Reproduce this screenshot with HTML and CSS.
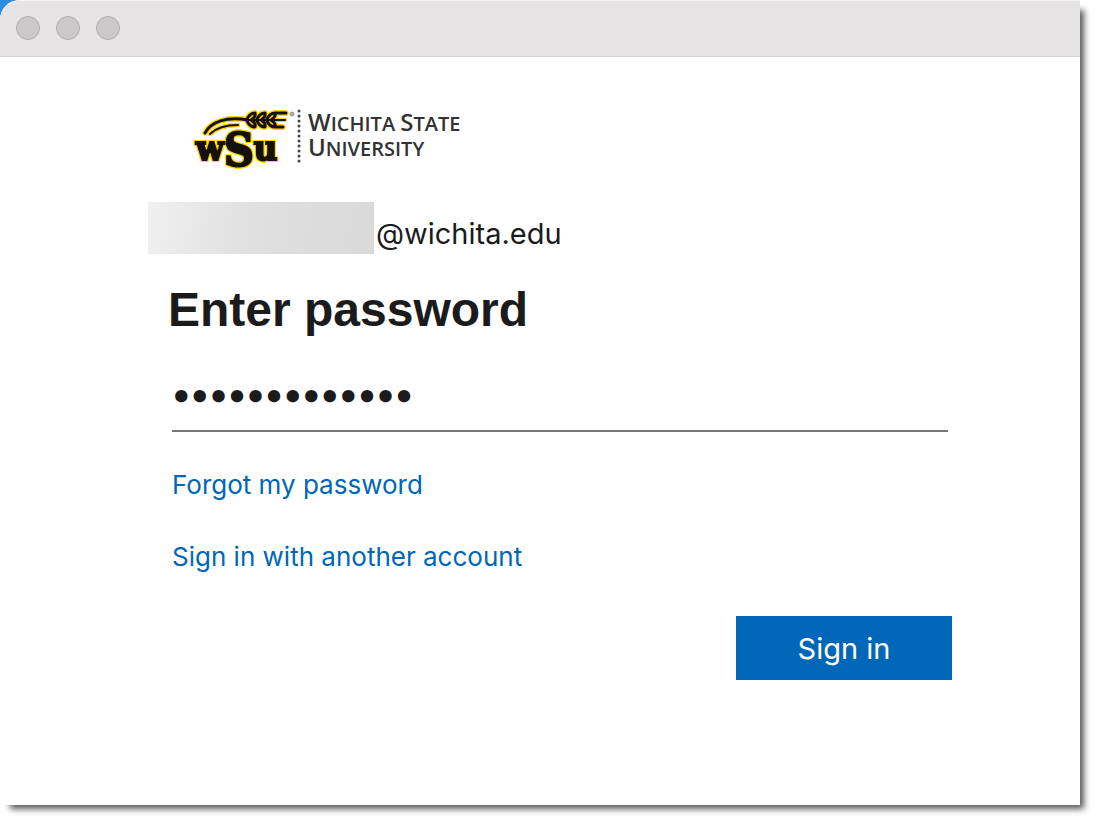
FILE: index.html
```html
<!DOCTYPE html>
<html lang="en">
<head>
    <meta charset="utf-8">
    <title>Sign in</title>
    <link rel="stylesheet" href="styles.css">
</head>
<body>
    <div class="window">
        <div class="titlebar">
            <button class="dot" type="button" aria-label="Close"></button>
            <button class="dot" type="button" aria-label="Minimize"></button>
            <button class="dot" type="button" aria-label="Zoom"></button>
        </div>

        <form class="login">
            <div class="brand">
                <!-- wheat shock logo -->
                <svg class="logo" width="108" height="68" viewBox="0 0 108 68">
                    <g class="mark">
                        <g fill="none" stroke="#15100a" stroke-linecap="round" stroke-linejoin="round">
                            <path d="M13 28C19 17 34 11 56 15" stroke-width="3"/>
                            <path d="M18 29C25 22 34 20 46 20" stroke-width="2"/>
                            <path d="M54 15H93" stroke-width="2"/>
                            <path d="M55 14C57 10 59 8 63 8Q64 12 60 14M65 14C67 10 69 8 73 8Q74 12 70 14M75 14C77 10 79 8 83 8Q84 12 80 14M83 8H94M55 16C57 20 59 22 63 22Q64 18 60 16M65 16C67 20 69 22 73 22Q74 18 70 16M75 16C77 20 79 22 83 22Q84 18 80 16M83 22H91" stroke-width="3"/>
                        </g>
                        <text class="logo-text" x="4" y="55">w<tspan class="logo-s" dy="6">S</tspan><tspan dy="-6">u</tspan></text>
                    </g>
                    <circle cx="100" cy="9" r="2" fill="#aaa" stroke="#999"/>
                    <path d="M107 6V60" stroke="#444" stroke-width="3" stroke-linecap="round" stroke-dasharray="0 5"/>
                </svg>
                <div class="brand-name"><span class="cap">W</span>ICHITA <span class="cap">S</span>TATE<br><span class="cap">U</span>NIVERSITY</div>
            </div>

            <div class="account"><span class="redacted"></span><span>@wichita.edu</span></div>

            <h1><label for="password">Enter password</label></h1>
            <input type="password" id="password" value="aaaaaaaaaaaaa">

            <a href="#">Forgot my password</a>
            <a href="#">Sign in with another account</a>

            <button class="signin" type="button">Sign in</button>
        </form>
    </div>
</body>
</html>
```

FILE: styles.css
```css
* {
    box-sizing: border-box;
}

body {
    margin: 0;
    padding: 0 15px 15px 0;
    font-family: Inter, "Liberation Sans", sans-serif;
    color: #1b1b1b;
    background: #fff linear-gradient(#2f8bdc, #2f8bdc) no-repeat 0 0 / 24px 24px;
}

.window {
    min-height: calc(100vh - 15px);
    background: #fff;
    border-top-left-radius: 20px;
    box-shadow: 7px 7px 6px -3px rgba(0, 0, 0, 0.65);
}

.titlebar {
    display: flex;
    align-items: center;
    gap: 16px;
    height: 57px;
    padding: 0 16px 2px;
    background: #e6e4e5;
    border-top: 1px solid #f3f2f3;
    border-bottom: 1px solid #d3d1d2;
    border-top-left-radius: 20px;
}

.dot {
    width: 24px;
    height: 24px;
    padding: 0;
    border: 1px solid #b0aeaf;
    border-radius: 50%;
    background: #cbc9ca;
}

.login {
    display: flex;
    flex-direction: column;
    align-items: flex-start;
    padding: 48px 132px 48px 172px;
}

.brand {
    display: flex;
    gap: 8px;
    margin-left: 20px;
}

.logo {
    overflow: visible;
}

.mark {
    filter: drop-shadow(1px 0 0 #ffd400) drop-shadow(-1px 0 0 #ffd400) drop-shadow(0 1px 0 #ffd400) drop-shadow(0 -1px 0 #ffd400);
}

.logo-text {
    font-family: "DejaVu Serif Condensed", "DejaVu Serif", serif;
    font-size: 36px;
    font-weight: bold;
    fill: #15100a;
    stroke: #15100a;
    stroke-width: 2px;
}

.logo-s {
    font-size: 46px;
}

.brand-name {
    padding-top: 5px;
    font-family: "Open Sans", sans-serif;
    font-size: 20px;
    line-height: 23px;
    font-weight: 600;
    color: #333;
}

.cap {
    font-size: 24px;
    line-height: 23px;
}

.account {
    display: flex;
    align-items: center;
    gap: 2px;
    height: 52px;
    margin: 29px 0 0 -24px;
    font-size: 29px;
}

.redacted {
    width: 226px;
    height: 52px;
    background: linear-gradient(100deg, #f0f0f0, #e0e0e0 45%, #d9d9d9);
}

.account span:last-child {
    padding-top: 10px;
}

h1 {
    margin: 28px 0 0 -4px;
    font-family: "Liberation Sans", Arial, sans-serif;
    font-size: 48px;
    line-height: 56px;
}

input {
    width: 100%;
    height: 72px;
    margin: 22px 0 37px;
    padding: 0 0 2px;
    border: 0;
    border-bottom: 2px solid #777;
    font-family: Inter, sans-serif;
    font-size: 33px;
    color: #1b1b1b;
    -webkit-text-stroke: 2px #1b1b1b;
    outline: none;
}

a {
    margin-bottom: 40px;
    font-size: 26px;
    line-height: 32px;
    color: #0067b8;
    text-decoration: none;
}

.signin {
    align-self: flex-end;
    width: 216px;
    height: 64px;
    margin: 3px -4px 0 0;
    border: 0;
    background: #0067b8;
    color: #fff;
    font-family: Inter, sans-serif;
    font-size: 29px;
}
```
